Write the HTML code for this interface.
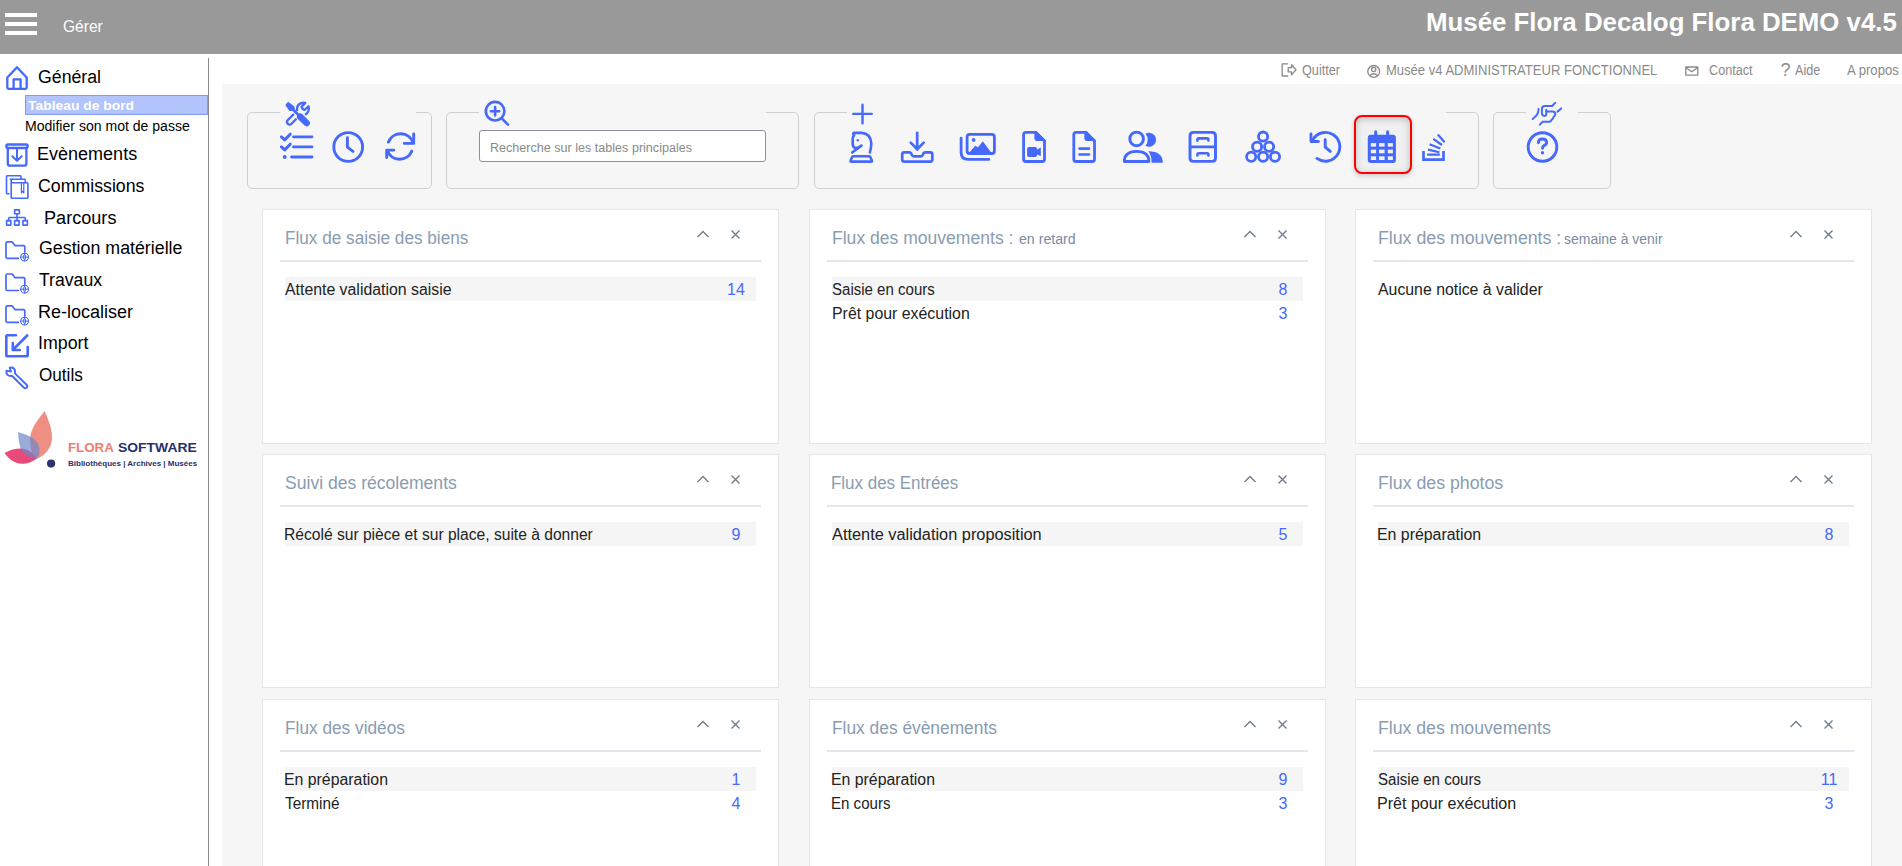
<!DOCTYPE html>
<html><head><meta charset="utf-8"><style>
html,body{margin:0;padding:0;}
body{width:1902px;height:866px;position:relative;overflow:hidden;background:#fff;font-family:"Liberation Sans",sans-serif;}
.t{position:absolute;white-space:nowrap;line-height:1;}
.r{position:absolute;}
.fs{position:absolute;box-sizing:border-box;border:1px solid #d0d0d0;border-radius:5px;}
svg.ov{position:absolute;left:0;top:0;}
</style></head><body>
<div class="r" style="left:0px;top:0px;width:1902px;height:54px;background:#999;"></div>
<div class="r" style="left:5px;top:13px;width:32px;height:4px;background:#fff;"></div>
<div class="r" style="left:5px;top:22px;width:32px;height:4px;background:#fff;"></div>
<div class="r" style="left:5px;top:31px;width:32px;height:4px;background:#fff;"></div>
<div class="t" id="t0" style="left:62.84px;top:18.23px;font-size:16.5px;color:#fff;font-weight:normal;transform:scaleX(0.9429);transform-origin:0 0;">Gérer</div>
<div class="t" id="t1" style="left:1426.10px;top:9.68px;font-size:25.9px;color:#fff;font-weight:bold;transform:scaleX(0.9978);transform-origin:0 0;">Musée Flora Decalog Flora DEMO v4.5</div>
<div class="r" style="left:208px;top:58px;width:1px;height:808px;background:#8a8a8a;"></div>
<div class="t" id="t2" style="left:38.10px;top:68.06px;font-size:18px;color:#000;font-weight:normal;transform:scaleX(0.9845);transform-origin:0 0;">Général</div>
<div class="t" id="t3" style="left:37.09px;top:144.56px;font-size:18px;color:#000;font-weight:normal;transform:scaleX(1.0000);transform-origin:0 0;">Evènements</div>
<div class="t" id="t4" style="left:38.10px;top:176.76px;font-size:18px;color:#000;font-weight:normal;transform:scaleX(0.9852);transform-origin:0 0;">Commissions</div>
<div class="t" id="t5" style="left:43.50px;top:209.06px;font-size:18px;color:#000;font-weight:normal;transform:scaleX(1.0056);transform-origin:0 0;">Parcours</div>
<div class="t" id="t6" style="left:39.00px;top:238.56px;font-size:18px;color:#000;font-weight:normal;transform:scaleX(0.9890);transform-origin:0 0;">Gestion matérielle</div>
<div class="t" id="t7" style="left:38.99px;top:270.66px;font-size:18px;color:#000;font-weight:normal;transform:scaleX(0.9787);transform-origin:0 0;">Travaux</div>
<div class="t" id="t8" style="left:38.00px;top:302.56px;font-size:18px;color:#000;font-weight:normal;transform:scaleX(1.0001);transform-origin:0 0;">Re-localiser</div>
<div class="t" id="t9" style="left:38.01px;top:334.46px;font-size:18px;color:#000;font-weight:normal;transform:scaleX(0.9880);transform-origin:0 0;">Import</div>
<div class="t" id="t10" style="left:39.00px;top:366.06px;font-size:18px;color:#000;font-weight:normal;transform:scaleX(0.9518);transform-origin:0 0;">Outils</div>
<div class="r" style="left:25px;top:95px;width:183px;height:20px;background:#b3c3fb;box-sizing:border-box;border:1px solid #7f9bf6;"></div>
<div class="t" id="t11" style="left:28.09px;top:99.37px;font-size:13.5px;color:#fff;font-weight:bold;transform:scaleX(1.0274);transform-origin:0 0;">Tableau de bord</div>
<div class="t" id="t12" style="left:25.00px;top:118.85px;font-size:14px;color:#000;font-weight:normal;transform:scaleX(1.0037);transform-origin:0 0;">Modifier son mot de passe</div>
<div class="t" id="t13" style="left:67.81px;top:441.29px;font-size:13.6px;color:#ef7d70;font-weight:bold;transform:scaleX(0.9783);transform-origin:0 0;">FLORA</div>
<div class="t" id="t14" style="left:117.79px;top:441.29px;font-size:13.6px;color:#2b2f6b;font-weight:bold;transform:scaleX(1.0234);transform-origin:0 0;">SOFTWARE</div>
<div class="t" id="t15" style="left:67.78px;top:459.77px;font-size:7.6px;color:#2b2f6b;font-weight:bold;transform:scaleX(1.0541);transform-origin:0 0;">Bibliothèques | Archives | Musées</div>
<div class="r" style="left:222px;top:84px;width:1680px;height:782px;background:#f6f6f6;"></div>
<div class="t" id="t16" style="left:1301.53px;top:64.32px;font-size:13.8px;color:#8a8a8a;font-weight:normal;transform:scaleX(0.9173);transform-origin:0 0;">Quitter</div>
<div class="t" id="t17" style="left:1385.76px;top:64.32px;font-size:13.8px;color:#8a8a8a;font-weight:normal;transform:scaleX(0.9447);transform-origin:0 0;">Musée v4 ADMINISTRATEUR FONCTIONNEL</div>
<div class="t" id="t18" style="left:1709.13px;top:64.32px;font-size:13.8px;color:#8a8a8a;font-weight:normal;transform:scaleX(0.9167);transform-origin:0 0;">Contact</div>
<div class="t" id="t19" style="left:1780.60px;top:61.46px;font-size:18px;color:#8a8a8a;font-weight:normal;">?</div>
<div class="t" id="t20" style="left:1795.11px;top:64.32px;font-size:13.8px;color:#8a8a8a;font-weight:normal;transform:scaleX(0.9118);transform-origin:0 0;">Aide</div>
<div class="t" id="t21" style="left:1847.41px;top:64.32px;font-size:13.8px;color:#8a8a8a;font-weight:normal;transform:scaleX(0.9518);transform-origin:0 0;">A propos</div>
<div class="fs" style="left:247px;top:112px;width:185px;height:77px;"></div>
<div class="r" style="left:280px;top:111px;width:136px;height:3px;background:#f6f6f6;"></div>
<div class="fs" style="left:446px;top:112px;width:353px;height:77px;"></div>
<div class="r" style="left:479px;top:111px;width:287px;height:3px;background:#f6f6f6;"></div>
<div class="fs" style="left:814px;top:112px;width:665px;height:77px;"></div>
<div class="r" style="left:847px;top:111px;width:599px;height:3px;background:#f6f6f6;"></div>
<div class="fs" style="left:1493px;top:112px;width:118px;height:77px;"></div>
<div class="r" style="left:1526px;top:111px;width:52px;height:3px;background:#f6f6f6;"></div>
<div class="r" style="left:479px;top:130px;width:287px;height:32px;box-sizing:border-box;border:1px solid #8f8f9d;border-radius:3px;background:#fff;"></div>
<div class="t" id="t22" style="left:490.20px;top:141.72px;font-size:12.5px;color:#8a8a8a;font-weight:normal;transform:scaleX(1.0060);transform-origin:0 0;">Recherche sur les tables principales</div>
<div class="r" style="left:1354px;top:115px;width:58px;height:59px;box-sizing:border-box;border:2px solid #f00;border-radius:8px;background:#f0f0f0;box-shadow:inset 0 2px 7px rgba(0,0,0,.22), 0 2px 5px rgba(0,0,0,.18);"></div>
<div class="r" style="left:262px;top:209px;width:517px;height:235px;background:#fff;box-sizing:border-box;border:1px solid #e3e6ea;"></div>
<div class="t" id="t23" style="left:285.28px;top:228.51px;font-size:18.3px;color:#8a9cb1;font-weight:normal;transform:scaleX(0.9399);transform-origin:0 0;">Flux de saisie des biens</div>
<div class="r" style="left:280px;top:260px;width:481px;height:2px;background:#e2e7ee;"></div>
<div class="r" style="left:285px;top:277px;width:471px;height:24px;background:#f5f5f5;"></div>
<div class="t" id="t24" style="left:285.40px;top:282.26px;font-size:16px;color:#222;font-weight:normal;transform:scaleX(0.9905);transform-origin:0 0;">Attente validation saisie</div>
<div class="t" style="left:706px;width:60px;text-align:center;top:282.26px;font-size:16px;color:#4568fd;">14</div>
<div class="r" style="left:809px;top:209px;width:517px;height:235px;background:#fff;box-sizing:border-box;border:1px solid #e3e6ea;"></div>
<div class="t" id="t25" style="left:832.26px;top:228.51px;font-size:18.3px;color:#8a9cb1;font-weight:normal;transform:scaleX(0.9599);transform-origin:0 0;">Flux des mouvements :</div>
<div class="t" id="t26" style="left:1018.50px;top:232.15px;font-size:14px;color:#7a8ca2;font-weight:normal;transform:scaleX(1.0108);transform-origin:0 0;">en retard</div>
<div class="r" style="left:827px;top:260px;width:481px;height:2px;background:#e2e7ee;"></div>
<div class="r" style="left:832px;top:277px;width:471px;height:24px;background:#f5f5f5;"></div>
<div class="t" id="t27" style="left:832.40px;top:282.26px;font-size:16px;color:#222;font-weight:normal;transform:scaleX(0.9395);transform-origin:0 0;">Saisie en cours</div>
<div class="t" style="left:1253px;width:60px;text-align:center;top:282.26px;font-size:16px;color:#4568fd;">8</div>
<div class="t" id="t28" style="left:832.40px;top:306.26px;font-size:16px;color:#222;font-weight:normal;transform:scaleX(0.9928);transform-origin:0 0;">Prêt pour exécution</div>
<div class="t" style="left:1253px;width:60px;text-align:center;top:306.26px;font-size:16px;color:#4568fd;">3</div>
<div class="r" style="left:1355px;top:209px;width:517px;height:235px;background:#fff;box-sizing:border-box;border:1px solid #e3e6ea;"></div>
<div class="t" id="t29" style="left:1378.25px;top:228.51px;font-size:18.3px;color:#8a9cb1;font-weight:normal;transform:scaleX(0.9696);transform-origin:0 0;">Flux des mouvements :</div>
<div class="t" id="t30" style="left:1564.20px;top:232.15px;font-size:14px;color:#7a8ca2;font-weight:normal;transform:scaleX(0.9980);transform-origin:0 0;">semaine à venir</div>
<div class="r" style="left:1373px;top:260px;width:481px;height:2px;background:#e2e7ee;"></div>
<div class="t" id="t31" style="left:1378.40px;top:282.26px;font-size:16px;color:#222;font-weight:normal;transform:scaleX(0.9904);transform-origin:0 0;">Aucune notice à valider</div>
<div class="r" style="left:262px;top:454px;width:517px;height:234px;background:#fff;box-sizing:border-box;border:1px solid #e3e6ea;"></div>
<div class="t" id="t32" style="left:285.22px;top:473.51px;font-size:18.3px;color:#8a9cb1;font-weight:normal;transform:scaleX(0.9607);transform-origin:0 0;">Suivi des récolements</div>
<div class="r" style="left:280px;top:505px;width:481px;height:2px;background:#e2e7ee;"></div>
<div class="r" style="left:285px;top:522px;width:471px;height:24px;background:#f5f5f5;"></div>
<div class="t" id="t33" style="left:284.43px;top:527.26px;font-size:16px;color:#222;font-weight:normal;transform:scaleX(0.9753);transform-origin:0 0;">Récolé sur pièce et sur place, suite à donner</div>
<div class="t" style="left:706px;width:60px;text-align:center;top:527.26px;font-size:16px;color:#4568fd;">9</div>
<div class="r" style="left:809px;top:454px;width:517px;height:234px;background:#fff;box-sizing:border-box;border:1px solid #e3e6ea;"></div>
<div class="t" id="t34" style="left:831.30px;top:473.51px;font-size:18.3px;color:#8a9cb1;font-weight:normal;transform:scaleX(0.9274);transform-origin:0 0;">Flux des Entrées</div>
<div class="r" style="left:827px;top:505px;width:481px;height:2px;background:#e2e7ee;"></div>
<div class="r" style="left:832px;top:522px;width:471px;height:24px;background:#f5f5f5;"></div>
<div class="t" id="t35" style="left:832.40px;top:527.26px;font-size:16px;color:#222;font-weight:normal;transform:scaleX(1.0205);transform-origin:0 0;">Attente validation proposition</div>
<div class="t" style="left:1253px;width:60px;text-align:center;top:527.26px;font-size:16px;color:#4568fd;">5</div>
<div class="r" style="left:1355px;top:454px;width:517px;height:234px;background:#fff;box-sizing:border-box;border:1px solid #e3e6ea;"></div>
<div class="t" id="t36" style="left:1378.24px;top:473.51px;font-size:18.3px;color:#8a9cb1;font-weight:normal;transform:scaleX(0.9701);transform-origin:0 0;">Flux des photos</div>
<div class="r" style="left:1373px;top:505px;width:481px;height:2px;background:#e2e7ee;"></div>
<div class="r" style="left:1378px;top:522px;width:471px;height:24px;background:#f5f5f5;"></div>
<div class="t" id="t37" style="left:1377.41px;top:527.26px;font-size:16px;color:#222;font-weight:normal;transform:scaleX(0.9922);transform-origin:0 0;">En préparation</div>
<div class="t" style="left:1799px;width:60px;text-align:center;top:527.26px;font-size:16px;color:#4568fd;">8</div>
<div class="r" style="left:262px;top:699px;width:517px;height:230px;background:#fff;box-sizing:border-box;border:1px solid #e3e6ea;"></div>
<div class="t" id="t38" style="left:285.27px;top:718.51px;font-size:18.3px;color:#8a9cb1;font-weight:normal;transform:scaleX(0.9441);transform-origin:0 0;">Flux des vidéos</div>
<div class="r" style="left:280px;top:750px;width:481px;height:2px;background:#e2e7ee;"></div>
<div class="r" style="left:285px;top:767px;width:471px;height:24px;background:#f5f5f5;"></div>
<div class="t" id="t39" style="left:284.41px;top:772.26px;font-size:16px;color:#222;font-weight:normal;transform:scaleX(0.9903);transform-origin:0 0;">En préparation</div>
<div class="t" style="left:706px;width:60px;text-align:center;top:772.26px;font-size:16px;color:#4568fd;">1</div>
<div class="t" id="t40" style="left:285.40px;top:796.26px;font-size:16px;color:#222;font-weight:normal;transform:scaleX(0.9579);transform-origin:0 0;">Terminé</div>
<div class="t" style="left:706px;width:60px;text-align:center;top:796.26px;font-size:16px;color:#4568fd;">4</div>
<div class="r" style="left:809px;top:699px;width:517px;height:230px;background:#fff;box-sizing:border-box;border:1px solid #e3e6ea;"></div>
<div class="t" id="t41" style="left:832.27px;top:718.51px;font-size:18.3px;color:#8a9cb1;font-weight:normal;transform:scaleX(0.9489);transform-origin:0 0;">Flux des évènements</div>
<div class="r" style="left:827px;top:750px;width:481px;height:2px;background:#e2e7ee;"></div>
<div class="r" style="left:832px;top:767px;width:471px;height:24px;background:#f5f5f5;"></div>
<div class="t" id="t42" style="left:831.41px;top:772.26px;font-size:16px;color:#222;font-weight:normal;transform:scaleX(0.9903);transform-origin:0 0;">En préparation</div>
<div class="t" style="left:1253px;width:60px;text-align:center;top:772.26px;font-size:16px;color:#4568fd;">9</div>
<div class="t" id="t43" style="left:831.46px;top:796.26px;font-size:16px;color:#222;font-weight:normal;transform:scaleX(0.9419);transform-origin:0 0;">En cours</div>
<div class="t" style="left:1253px;width:60px;text-align:center;top:796.26px;font-size:16px;color:#4568fd;">3</div>
<div class="r" style="left:1355px;top:699px;width:517px;height:230px;background:#fff;box-sizing:border-box;border:1px solid #e3e6ea;"></div>
<div class="t" id="t44" style="left:1378.24px;top:718.51px;font-size:18.3px;color:#8a9cb1;font-weight:normal;transform:scaleX(0.9661);transform-origin:0 0;">Flux des mouvements</div>
<div class="r" style="left:1373px;top:750px;width:481px;height:2px;background:#e2e7ee;"></div>
<div class="r" style="left:1378px;top:767px;width:471px;height:24px;background:#f5f5f5;"></div>
<div class="t" id="t45" style="left:1378.40px;top:772.26px;font-size:16px;color:#222;font-weight:normal;transform:scaleX(0.9413);transform-origin:0 0;">Saisie en cours</div>
<div class="t" style="left:1799px;width:60px;text-align:center;top:772.26px;font-size:16px;color:#4568fd;">11</div>
<div class="t" id="t46" style="left:1377.39px;top:796.26px;font-size:16px;color:#222;font-weight:normal;transform:scaleX(1.0029);transform-origin:0 0;">Prêt pour exécution</div>
<div class="t" style="left:1799px;width:60px;text-align:center;top:796.26px;font-size:16px;color:#4568fd;">3</div>
<svg class="ov" width="1902" height="866" viewBox="0 0 1902 866">
<path d="M697.5 237 L703 231.5 L708.5 237" fill="none" stroke="#707d8e" stroke-width="1.4"/>
<path d="M731.5 230.5 L739.5 238.5 M739.5 230.5 L731.5 238.5" fill="none" stroke="#707d8e" stroke-width="1.4"/>
<path d="M1244.5 237 L1250 231.5 L1255.5 237" fill="none" stroke="#707d8e" stroke-width="1.4"/>
<path d="M1278.5 230.5 L1286.5 238.5 M1286.5 230.5 L1278.5 238.5" fill="none" stroke="#707d8e" stroke-width="1.4"/>
<path d="M1790.5 237 L1796 231.5 L1801.5 237" fill="none" stroke="#707d8e" stroke-width="1.4"/>
<path d="M1824.5 230.5 L1832.5 238.5 M1832.5 230.5 L1824.5 238.5" fill="none" stroke="#707d8e" stroke-width="1.4"/>
<path d="M697.5 482 L703 476.5 L708.5 482" fill="none" stroke="#707d8e" stroke-width="1.4"/>
<path d="M731.5 475.5 L739.5 483.5 M739.5 475.5 L731.5 483.5" fill="none" stroke="#707d8e" stroke-width="1.4"/>
<path d="M1244.5 482 L1250 476.5 L1255.5 482" fill="none" stroke="#707d8e" stroke-width="1.4"/>
<path d="M1278.5 475.5 L1286.5 483.5 M1286.5 475.5 L1278.5 483.5" fill="none" stroke="#707d8e" stroke-width="1.4"/>
<path d="M1790.5 482 L1796 476.5 L1801.5 482" fill="none" stroke="#707d8e" stroke-width="1.4"/>
<path d="M1824.5 475.5 L1832.5 483.5 M1832.5 475.5 L1824.5 483.5" fill="none" stroke="#707d8e" stroke-width="1.4"/>
<path d="M697.5 727 L703 721.5 L708.5 727" fill="none" stroke="#707d8e" stroke-width="1.4"/>
<path d="M731.5 720.5 L739.5 728.5 M739.5 720.5 L731.5 728.5" fill="none" stroke="#707d8e" stroke-width="1.4"/>
<path d="M1244.5 727 L1250 721.5 L1255.5 727" fill="none" stroke="#707d8e" stroke-width="1.4"/>
<path d="M1278.5 720.5 L1286.5 728.5 M1286.5 720.5 L1278.5 728.5" fill="none" stroke="#707d8e" stroke-width="1.4"/>
<path d="M1790.5 727 L1796 721.5 L1801.5 727" fill="none" stroke="#707d8e" stroke-width="1.4"/>
<path d="M1824.5 720.5 L1832.5 728.5 M1832.5 720.5 L1824.5 728.5" fill="none" stroke="#707d8e" stroke-width="1.4"/>
<path d="M8.5 88.8 H25.5 Q26.7 88.8 26.7 87.6 V77.5 L17 67.2 L7.3 77.5 V87.6 Q7.3 88.8 8.5 88.8 Z" fill="none" stroke="#4568fd" stroke-width="2.3" stroke-linecap="round" stroke-linejoin="round"/>
<path d="M13.6 88.8 V79.4 H20.6 V88.8" fill="none" stroke="#4568fd" stroke-width="2.3" stroke-linecap="round" stroke-linejoin="round"/>
<path d="M7.8 144.4 H26.2 Q27.6 144.4 27.6 146.2 Q27.6 148 26.2 148 H7.8 Q6.4 148 6.4 146.2 Q6.4 144.4 7.8 144.4 Z" fill="none" stroke="#4568fd" stroke-width="2.5" stroke-linecap="round" stroke-linejoin="round"/>
<path d="M7.8 148.1 V163.5 Q7.8 165.7 10 165.7 H24.2 Q26.4 165.7 26.4 163.5 V148.1" fill="none" stroke="#4568fd" stroke-width="2.3" stroke-linecap="round" stroke-linejoin="round"/>
<path d="M17 149 V160.5 M12.3 156.3 L17 160.8 L21.7 156.3" fill="none" stroke="#4568fd" stroke-width="2.0" stroke-linecap="round" stroke-linejoin="round"/>
<path d="M9 193.8 H7.3 Q6.5 193.8 6.5 193 V176.6 Q6.5 175.8 7.3 175.8 H20.3 Q21 175.8 21 176.6 V179" fill="none" stroke="#4568fd" stroke-width="1.6" stroke-linecap="round" stroke-linejoin="round"/>
<path d="M10.2 179.2 H24.7 Q25.3 179.2 25.3 179.9 V182.5" fill="none" stroke="#4568fd" stroke-width="1.6" stroke-linecap="round" stroke-linejoin="round"/>
<path d="M11.2 182.8 H27.3 Q27.9 182.8 27.9 183.5 V197.5 Q27.9 198.2 27.3 198.2 H11.9 Q11.2 198.2 11.2 197.5 V179.9 Q11.2 179.2 11.9 179.2" fill="none" stroke="#4568fd" stroke-width="1.6" stroke-linecap="round" stroke-linejoin="round"/>
<path d="M21.4 182.8 V192.8 L22.6 191.2 L23.8 192.8 V182.8" fill="none" stroke="#4568fd" stroke-width="1.2" stroke-linecap="round" stroke-linejoin="round"/>
<path d="M14.6 209.9 H19.4 V213.7 H14.6 Z" fill="none" stroke="#4568fd" stroke-width="1.6" stroke-linecap="round" stroke-linejoin="round"/>
<path d="M6.6 220.6 H10.8 V225.1 H6.6 Z M14.6 220.6 H19.1 V225.1 H14.6 Z M22.9 220.6 H27.4 V225.1 H22.9 Z" fill="none" stroke="#4568fd" stroke-width="1.6" stroke-linecap="round" stroke-linejoin="round"/>
<path d="M17 213.7 V220.6 M8.7 220.6 V218.2 Q8.7 217.5 9.4 217.5 H24.5 Q25.2 217.5 25.2 218.2 V220.6" fill="none" stroke="#4568fd" stroke-width="1.6" stroke-linecap="round" stroke-linejoin="round"/>
<path d="M18.4 258.4 H7.3 Q6 258.4 6 257.1 V243.20000000000002 Q6 241.9 7.3 241.9 H12.3 L15 245.6 H23.5 Q24.8 245.6 24.8 246.9 V252.1" fill="none" stroke="#4568fd" stroke-width="1.7" stroke-linecap="round" stroke-linejoin="round"/>
<circle cx="24.6" cy="257.1" r="3.9" fill="none" stroke="#4568fd" stroke-width="1.1"/>
<path d="M20.700000000000003 257.1 H28.5 M24.6 253.20000000000002 Q22.3 257.1 24.6 261.0 Q26.900000000000002 257.1 24.6 253.20000000000002" fill="none" stroke="#4568fd" stroke-width="1.0" stroke-linecap="round" stroke-linejoin="round"/>
<path d="M18.4 290.5 H7.3 Q6 290.5 6 289.2 V275.3 Q6 274.0 7.3 274.0 H12.3 L15 277.7 H23.5 Q24.8 277.7 24.8 279.0 V284.2" fill="none" stroke="#4568fd" stroke-width="1.7" stroke-linecap="round" stroke-linejoin="round"/>
<circle cx="24.6" cy="289.2" r="3.9" fill="none" stroke="#4568fd" stroke-width="1.1"/>
<path d="M20.700000000000003 289.2 H28.5 M24.6 285.3 Q22.3 289.2 24.6 293.09999999999997 Q26.900000000000002 289.2 24.6 285.3" fill="none" stroke="#4568fd" stroke-width="1.0" stroke-linecap="round" stroke-linejoin="round"/>
<path d="M18.4 322.4 H7.3 Q6 322.4 6 321.09999999999997 V307.2 Q6 305.9 7.3 305.9 H12.3 L15 309.59999999999997 H23.5 Q24.8 309.59999999999997 24.8 310.9 V316.09999999999997" fill="none" stroke="#4568fd" stroke-width="1.7" stroke-linecap="round" stroke-linejoin="round"/>
<circle cx="24.6" cy="321.09999999999997" r="3.9" fill="none" stroke="#4568fd" stroke-width="1.1"/>
<path d="M20.700000000000003 321.09999999999997 H28.5 M24.6 317.2 Q22.3 321.09999999999997 24.6 324.99999999999994 Q26.900000000000002 321.09999999999997 24.6 317.2" fill="none" stroke="#4568fd" stroke-width="1.0" stroke-linecap="round" stroke-linejoin="round"/>
<path d="M16 335.2 H7.6 Q6.3 335.2 6.3 336.5 V355 Q6.3 356.3 7.6 356.3 H26.4 Q27.7 356.3 27.7 355 V347" fill="none" stroke="#4568fd" stroke-width="2.6" stroke-linecap="round" stroke-linejoin="round"/>
<path d="M27.2 335.5 L13.2 349.5 M12.8 343 V350 H19.8" fill="none" stroke="#4568fd" stroke-width="2.6" stroke-linecap="round" stroke-linejoin="round"/>
<path d="M6.4 370.6 L11 371.6 L9.7 367.6 Q13.9 366.7 15 370.4 L14.9 373.4 L26.8 385 Q28 386.5 26.6 387.8 Q25.1 388.9 23.7 387.5 L12.2 376 Q8.9 376.4 7.2 374.6 Q6 373 6.4 370.6 Z" fill="none" stroke="#4568fd" stroke-width="1.9" stroke-linecap="round" stroke-linejoin="round"/>
<path d="M285.3 104.9 L287.6 102.2 Q288.2 101.8 288.8 102.2 L294.4 106.6 L294.9 109.4 L293.8 110.6 L290 110.9 Q289.4 110.9 289 110.4 Z" fill="#4568fd"/>
<path d="M292.5 109 L299.5 116" stroke="#4568fd" stroke-width="2.6" fill="none"/>
<path d="M300.3 116.8 L306.6 123" stroke="#4568fd" stroke-width="6.6" stroke-linecap="round" fill="none"/>
<path d="M293.2 114.6 L287.6 120.3 Q286.2 122.2 287.8 123.9 Q289.5 125.3 291.4 123.8 L295.9 119.2" fill="none" stroke="#4568fd" stroke-width="2.3" stroke-linecap="round" stroke-linejoin="round"/>
<path d="M297.1 110.1 Q296.6 105.6 300.2 103.6 Q302.6 102.4 305.3 102.9 L301.6 106.7 Q301.9 109.4 304.6 110 L308.5 106.2 Q309.3 108.8 308.3 111.2 Q307.4 113.1 305.8 114.2" fill="none" stroke="#4568fd" stroke-width="2.3" stroke-linecap="round" stroke-linejoin="round"/>
<path d="M281.4 136.8 L284.7 139.9 L290.2 134.2" fill="none" stroke="#4568fd" stroke-width="3.0" stroke-linecap="round" stroke-linejoin="round"/>
<path d="M281.4 146.8 L284.7 149.9 L290.2 144.2" fill="none" stroke="#4568fd" stroke-width="3.0" stroke-linecap="round" stroke-linejoin="round"/>
<circle cx="284.7" cy="156.9" r="2.0" fill="#4568fd"/>
<path d="M293.5 136.8 H312 M293.5 146.9 H312 M291.5 157 H312" fill="none" stroke="#4568fd" stroke-width="2.8" stroke-linecap="round" stroke-linejoin="round"/>
<circle cx="348.2" cy="147" r="14.4" fill="none" stroke="#4568fd" stroke-width="2.9"/>
<path d="M347.4 137.8 V147.2 L353 151.4" fill="none" stroke="#4568fd" stroke-width="2.9" stroke-linecap="round" stroke-linejoin="round"/>
<path d="M388.4 142.1 A13.2 13.2 0 0 1 413.2 142.9" fill="none" stroke="#4568fd" stroke-width="2.9" stroke-linecap="round" stroke-linejoin="round"/>
<path d="M413.7 133.9 V143.4 H404.3" fill="none" stroke="#4568fd" stroke-width="2.9" stroke-linecap="round" stroke-linejoin="round"/>
<path d="M411.8 151.1 A13.2 13.2 0 0 1 387.2 150.6" fill="none" stroke="#4568fd" stroke-width="2.9" stroke-linecap="round" stroke-linejoin="round"/>
<path d="M386.7 157.6 V150.1 H393.9" fill="none" stroke="#4568fd" stroke-width="2.9" stroke-linecap="round" stroke-linejoin="round"/>
<circle cx="495.1" cy="111.2" r="9.3" fill="none" stroke="#4568fd" stroke-width="2.6"/>
<path d="M502 118.6 L508 124.6" fill="none" stroke="#4568fd" stroke-width="2.6" stroke-linecap="round" stroke-linejoin="round"/>
<path d="M490.9 111.2 H499.3 M495.1 107 V115.4" fill="none" stroke="#4568fd" stroke-width="2.6" stroke-linecap="round" stroke-linejoin="round"/>
<path d="M862.5 104.8 V123.3 M853.3 113.9 H871.7" fill="none" stroke="#4568fd" stroke-width="2.4" stroke-linecap="round" stroke-linejoin="round"/>
<path d="M850.6 160.5 L852.3 156.8 Q852.7 156.2 853.4 156.2 H869 Q869.7 156.2 870.1 156.8 L871.9 160.5 Q872.3 161.6 871 161.6 H851.5 Q850.2 161.6 850.6 160.5 Z" fill="none" stroke="#4568fd" stroke-width="2.6" stroke-linecap="round" stroke-linejoin="round"/>
<path d="M852.2 152.5 Q856.5 149 861.5 145.6 Q857.5 148.6 855.2 148 Q852.9 147.3 852.7 143.6 V138.8 Q852.7 136.6 854.2 135.3 Q852.9 134.6 853.2 133.6 Q853.6 132.9 854.5 132.9 H861.5 Q870.7 133.6 871.3 143.3 Q871.3 147.5 869.9 152.5" fill="none" stroke="#4568fd" stroke-width="2.6" stroke-linecap="round" stroke-linejoin="round"/>
<circle cx="857.8" cy="140.2" r="1.2" fill="#4568fd"/>
<path d="M917.2 132.8 V149.6 M910.7 142.6 L917.2 149.2 L923.7 142.6" fill="none" stroke="#4568fd" stroke-width="2.7" stroke-linecap="round" stroke-linejoin="round"/>
<path d="M904.2 152.4 H909.6 Q910.6 152.4 911.2 153.5 L911.9 155 Q912.5 156.3 913.8 156.3 H920.8 Q922.1 156.3 922.7 155 L923.4 153.5 Q924 152.4 925 152.4 H930.3 Q932.3 152.4 932.3 154.4 V159.6 Q932.3 161.6 930.3 161.6 H904.2 Q902.2 161.6 902.2 159.6 V154.4 Q902.2 152.4 904.2 152.4 Z" fill="none" stroke="#4568fd" stroke-width="2.7" stroke-linecap="round" stroke-linejoin="round"/>
<path d="M969.6 134.4 H991.9 Q994.4 134.4 994.4 136.9 V151 Q994.4 153.5 991.9 153.5 H969.6 Q967.1 153.5 967.1 151 V136.9 Q967.1 134.4 969.6 134.4 Z" fill="none" stroke="#4568fd" stroke-width="2.8" stroke-linecap="round" stroke-linejoin="round"/>
<path d="M961.1 138.2 V152.3 Q961.1 159.3 968.1 159.3 H988.9" fill="none" stroke="#4568fd" stroke-width="2.8" stroke-linecap="round" stroke-linejoin="round"/>
<circle cx="973.6" cy="139.9" r="1.9" fill="#4568fd"/>
<path d="M969.3 152.4 L975.2 145.8 L978 147.2 L982.8 141.3 L991.1 152.4 Z" fill="#4568fd"/>
<path d="M1026 132.3 H1035.6 L1044.5 141 V159.3 Q1044.5 161.5 1042.3 161.5 H1025.8 Q1023.6 161.5 1023.6 159.3 V134.7 Q1023.6 132.3 1026 132.3 Z" fill="none" stroke="#4568fd" stroke-width="2.8" stroke-linecap="round" stroke-linejoin="round"/>
<path d="M1034.4 131.1 H1036.4 L1046 140.6 V141 H1036.8 Q1034.4 141 1034.4 138.6 Z" fill="#4568fd"/>
<path d="M1028.9 146.9 H1035.2 Q1037 146.9 1037 148.7 V149.4 L1040.8 147.6 V156 L1037 154.4 V155.2 Q1037 157 1035.2 157 H1028.9 Q1027.1 157 1027.1 155.2 V148.7 Q1027.1 146.9 1028.9 146.9 Z" fill="#4568fd"/>
<path d="M1076.2 132.3 H1085.8 L1094.5 141 V159.3 Q1094.5 161.5 1092.3 161.5 H1076 Q1073.8 161.5 1073.8 159.3 V134.7 Q1073.8 132.3 1076.2 132.3 Z" fill="none" stroke="#4568fd" stroke-width="2.8" stroke-linecap="round" stroke-linejoin="round"/>
<path d="M1084.4 131.1 H1086.4 L1096 140.6 V141 H1086.8 Q1084.4 141 1084.4 138.6 Z" fill="#4568fd"/>
<path d="M1079.5 148.6 H1089 M1079.5 154.5 H1089" fill="none" stroke="#4568fd" stroke-width="2.6" stroke-linecap="round" stroke-linejoin="round"/>
<circle cx="1136.6" cy="138.9" r="6.8" fill="none" stroke="#4568fd" stroke-width="2.9"/>
<path d="M1145.5 133.8 A7 7 0 1 1 1145.5 145.8 A9.2 9.2 0 0 0 1145.5 133.8 Z" fill="#4568fd"/>
<path d="M1124.3 161.5 Q1124.3 151.3 1136.6 151.3 Q1148.9 151.3 1148.9 161.5 Z" fill="none" stroke="#4568fd" stroke-width="2.8" stroke-linecap="round" stroke-linejoin="round"/>
<path d="M1148.3 151.3 Q1162.8 151.3 1162.8 162.8 H1151.6 Q1151.6 155 1148.3 151.3 Z" fill="#4568fd"/>
<path d="M1193.5 132.4 H1212 Q1215.5 132.4 1215.5 135.9 V158 Q1215.5 161.4 1212 161.4 H1193.5 Q1190 161.4 1190 158 V135.9 Q1190 132.4 1193.5 132.4 Z M1190 146.9 H1215.5" fill="none" stroke="#4568fd" stroke-width="2.9" stroke-linecap="round" stroke-linejoin="round"/>
<path d="M1197.4 140.6 V139.8 Q1197.4 138.4 1198.8 138.4 H1207 Q1208.4 138.4 1208.4 139.8 V140.6 M1197.4 155.4 V154.6 Q1197.4 153.2 1198.8 153.2 H1207 Q1208.4 153.2 1208.4 154.6 V155.4" fill="none" stroke="#4568fd" stroke-width="2.6" stroke-linecap="round" stroke-linejoin="round"/>
<circle cx="1263.1" cy="136.6" r="4.6" fill="none" stroke="#4568fd" stroke-width="2.8"/>
<circle cx="1257.1" cy="146.7" r="4.6" fill="none" stroke="#4568fd" stroke-width="2.8"/>
<circle cx="1269.1" cy="146.7" r="4.6" fill="none" stroke="#4568fd" stroke-width="2.8"/>
<circle cx="1251.2" cy="156.8" r="4.6" fill="none" stroke="#4568fd" stroke-width="2.8"/>
<circle cx="1263.1" cy="156.8" r="4.6" fill="none" stroke="#4568fd" stroke-width="2.8"/>
<circle cx="1275" cy="156.8" r="4.6" fill="none" stroke="#4568fd" stroke-width="2.8"/>
<path d="M1313.19 139.17 A14.4 14.4 0 1 1 1316.94 158.45" fill="none" stroke="#4568fd" stroke-width="2.9" stroke-linecap="round" stroke-linejoin="round"/>
<path d="M1311 134 V141.5 H1318.4" fill="none" stroke="#4568fd" stroke-width="2.9" stroke-linecap="round" stroke-linejoin="round"/>
<path d="M1325.2 139.6 V147.1 L1330.3 151.4" fill="none" stroke="#4568fd" stroke-width="2.9" stroke-linecap="round" stroke-linejoin="round"/>
<path d="M1370.8 134.8 H1392.9 Q1395.9 134.8 1395.9 137.8 V160 Q1395.9 163 1392.9 163 H1370.8 Q1367.8 163 1367.8 160 V137.8 Q1367.8 134.8 1370.8 134.8 Z" fill="#4568fd"/>
<path d="M1375.7 131.8 V135 M1387.6 131.8 V135" fill="none" stroke="#4568fd" stroke-width="3.0" stroke-linecap="round" stroke-linejoin="round"/>
<rect x="1370.8" y="143.1" width="5.3" height="3.5" fill="#f0f0f0"/>
<rect x="1370.8" y="149.6" width="5.3" height="3.7" fill="#f0f0f0"/>
<rect x="1370.8" y="156.3" width="5.3" height="3.7" fill="#f0f0f0"/>
<rect x="1379" y="143.1" width="5.6" height="3.5" fill="#f0f0f0"/>
<rect x="1379" y="149.6" width="5.6" height="3.7" fill="#f0f0f0"/>
<rect x="1379" y="156.3" width="5.6" height="3.7" fill="#f0f0f0"/>
<rect x="1387.8" y="143.1" width="5.1" height="3.5" fill="#f0f0f0"/>
<rect x="1387.8" y="149.6" width="5.1" height="3.7" fill="#f0f0f0"/>
<rect x="1387.8" y="156.3" width="5.1" height="3.7" fill="#f0f0f0"/>
<path d="M1423.5 151.1 V159.6 H1443.5 V151.1" fill="none" stroke="#4568fd" stroke-width="2.7" stroke-linejoin="miter"/>
<path d="M1427.1 154.7 H1439.8 M1428 149.6 L1439.4 152.2 M1429.6 144.3 L1440.3 148.6 M1433.3 138.9 L1442 145 M1437.8 134.5 L1444.6 142.2" fill="none" stroke="#4568fd" stroke-width="2.2"/>
<path d="M1532.6 119.1 L1536.6 115.3 Q1538.5 113.2 1538.6 109" fill="none" stroke="#4568fd" stroke-width="2.0" stroke-linecap="round" stroke-linejoin="round"/>
<path d="M1555.2 102.9 L1552.1 106 H1545 Q1541.9 106 1541.9 109.1 V112.8 Q1541.9 115.9 1544.1 115.9 Q1546.3 115.9 1546.3 113.7 V109.8" fill="none" stroke="#4568fd" stroke-width="2.0" stroke-linecap="round" stroke-linejoin="round"/>
<path d="M1546.3 111.5 H1552.6 Q1555.3 111.5 1555.3 114 Q1555.3 115.8 1553.6 116.8 Q1553.6 119 1551.6 119.8 Q1551.2 121.7 1549.4 121.7 H1542.6 L1539.8 124.6" fill="none" stroke="#4568fd" stroke-width="2.0" stroke-linecap="round" stroke-linejoin="round"/>
<path d="M1557.4 111.8 L1561.2 108.4" fill="none" stroke="#4568fd" stroke-width="2.0" stroke-linecap="round" stroke-linejoin="round"/>
<circle cx="1542.5" cy="147" r="14.3" fill="none" stroke="#4568fd" stroke-width="2.9"/>
<path d="M1538.4 142.8 Q1538.4 139 1542.5 139 Q1546.6 139 1546.6 142.4 Q1546.6 144.4 1544.3 145.4 Q1542.5 146.3 1542.5 148.3" fill="none" stroke="#4568fd" stroke-width="2.9" stroke-linecap="round" stroke-linejoin="round"/>
<circle cx="1542.5" cy="152.8" r="1.7" fill="#4568fd"/>
<path d="M1287.7 63.8 H1282.2 V76 H1287.7" fill="none" stroke="#8a8a8a" stroke-width="1.3" stroke-linecap="round" stroke-linejoin="round"/>
<path d="M1288.2 67.7 H1291.5 V64.7 L1296 69.8 L1291.5 74.9 V71.9 H1288.2 Z" fill="none" stroke="#8a8a8a" stroke-width="1.3" stroke-linecap="round" stroke-linejoin="round"/>
<circle cx="1373.7" cy="71.4" r="5.9" fill="none" stroke="#8a8a8a" stroke-width="1.3"/>
<circle cx="1373.7" cy="69.6" r="2.1" fill="none" stroke="#8a8a8a" stroke-width="1.3"/>
<path d="M1369.8 75.6 Q1373.7 71.8 1377.6 75.6" fill="none" stroke="#8a8a8a" stroke-width="1.3" stroke-linecap="round" stroke-linejoin="round"/>
<path d="M1685.8 67 H1697.8 V75.2 H1685.8 Z M1685.8 67.5 L1691.8 71.8 L1697.8 67.5" fill="none" stroke="#8a8a8a" stroke-width="1.3" stroke-linecap="round" stroke-linejoin="round"/>
<path d="M44.7 411 C40 417 30 428 30 440 C30 450 33 456 36.8 458.8 C46 455 52.5 447 52 436 C51.5 426 47 417 44.7 411 Z" fill="#ef8f84"/>
<path d="M4.5 453 C10 450 16 448.5 21 448.6 C28 449 34 453 36.8 458.8 C32 462 27 464 22 463.8 C14 463.5 9 459 4.5 453 Z" fill="#e84a7a"/>
<path d="M18 432 C18.5 441 19.5 448 23.5 452.5 C27.5 456.5 32.5 458.5 36.8 458.8 C40 455 40.5 448 37.5 443 C34 437 26 434.5 18 432 Z" fill="#6e87c8" fill-opacity="0.7"/>
<circle cx="51.1" cy="463.6" r="4.1" fill="#2e3270"/>
</svg>
</body></html>
